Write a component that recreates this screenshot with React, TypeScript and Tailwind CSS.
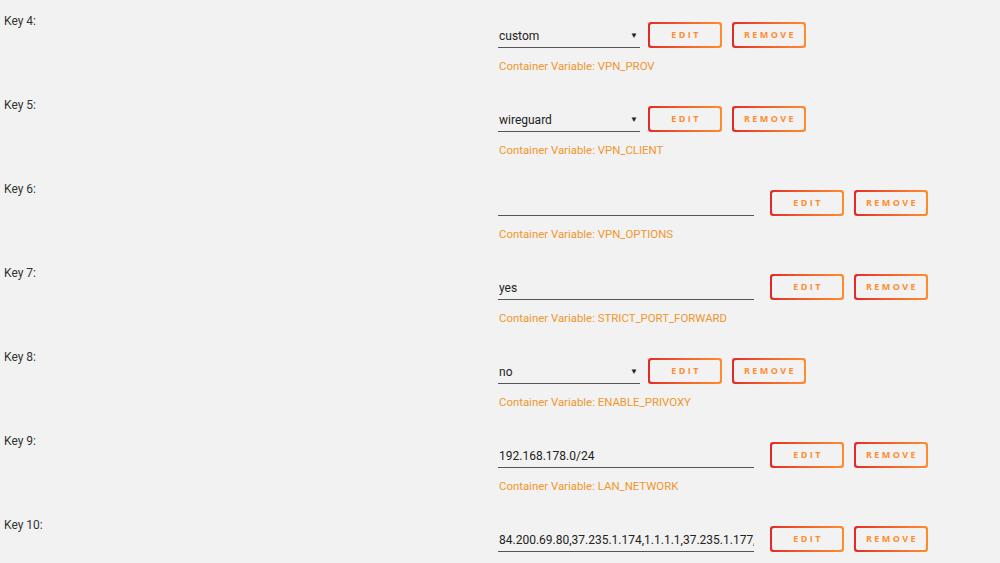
import React from 'react';

type Row = {
  key: string;
  value: string;
  variable?: string;
  select?: boolean;
};

const rows: Row[] = [
  { key: 'Key 4:', value: 'custom', variable: 'VPN_PROV', select: true },
  { key: 'Key 5:', value: 'wireguard', variable: 'VPN_CLIENT', select: true },
  { key: 'Key 6:', value: '', variable: 'VPN_OPTIONS' },
  { key: 'Key 7:', value: 'yes', variable: 'STRICT_PORT_FORWARD' },
  { key: 'Key 8:', value: 'no', variable: 'ENABLE_PRIVOXY', select: true },
  { key: 'Key 9:', value: '192.168.178.0/24', variable: 'LAN_NETWORK' },
  { key: 'Key 10:', value: '84.200.69.80,37.235.1.174,1.1.1.1,37.235.1.177,84.200.70.40,1.0.0.1' },
];

const GradientButton: React.FC<{ label: string }> = ({ label }) => (
  <button className="h-[26px] w-[74px] rounded-[3px] bg-linear-to-r from-[#e22828] to-[#ff8c2f] p-[2px]">
    <span className="flex h-full w-full items-center justify-center rounded-[2px] bg-[#f2f2f2] pl-[2px] font-['Open_Sans',sans-serif] text-[9px] font-bold uppercase tracking-[2.4px] text-[#ff8c2f]">
      {label}
    </span>
  </button>
);

export default function App() {
  return (
    <div className="min-h-screen w-full overflow-hidden bg-[#f2f2f2] font-['Roboto','Noto_Sans',sans-serif] text-[#333]">
      {rows.map((row) => (
        <div key={row.key} className="flex h-[84px]">
          <div className="w-[498px] pl-1 pt-[11px] text-[12px] leading-5">{row.key}</div>
          <div className="pt-[22px]">
            <div className="flex items-center">
              {row.select ? (
                <div className="flex h-[26px] w-[142px] items-center justify-between border-b border-[#555] pl-[1px] pr-[2px] pt-[2px] text-[12px] text-[#222]">
                  <span>{row.value}</span>
                  <span className="text-[8px] leading-none text-[#222]">▼</span>
                </div>
              ) : (
                <input
                  readOnly
                  value={row.value}
                  className="h-[26px] w-[256px] border-b border-[#555] bg-transparent pl-[1px] pt-[2px] text-[12px] text-[#222] outline-none"
                />
              )}
              <div className={`flex gap-[10px] ${row.select ? 'ml-2' : 'ml-4'}`}>
                <GradientButton label="Edit" />
                <GradientButton label="Remove" />
              </div>
            </div>
            {row.variable && (
              <div className="mt-[9px] pl-[1px] text-[11.4px] leading-[18px] text-[#f0962e]">
                Container Variable: {row.variable}
              </div>
            )}
          </div>
        </div>
      ))}
    </div>
  );
}
